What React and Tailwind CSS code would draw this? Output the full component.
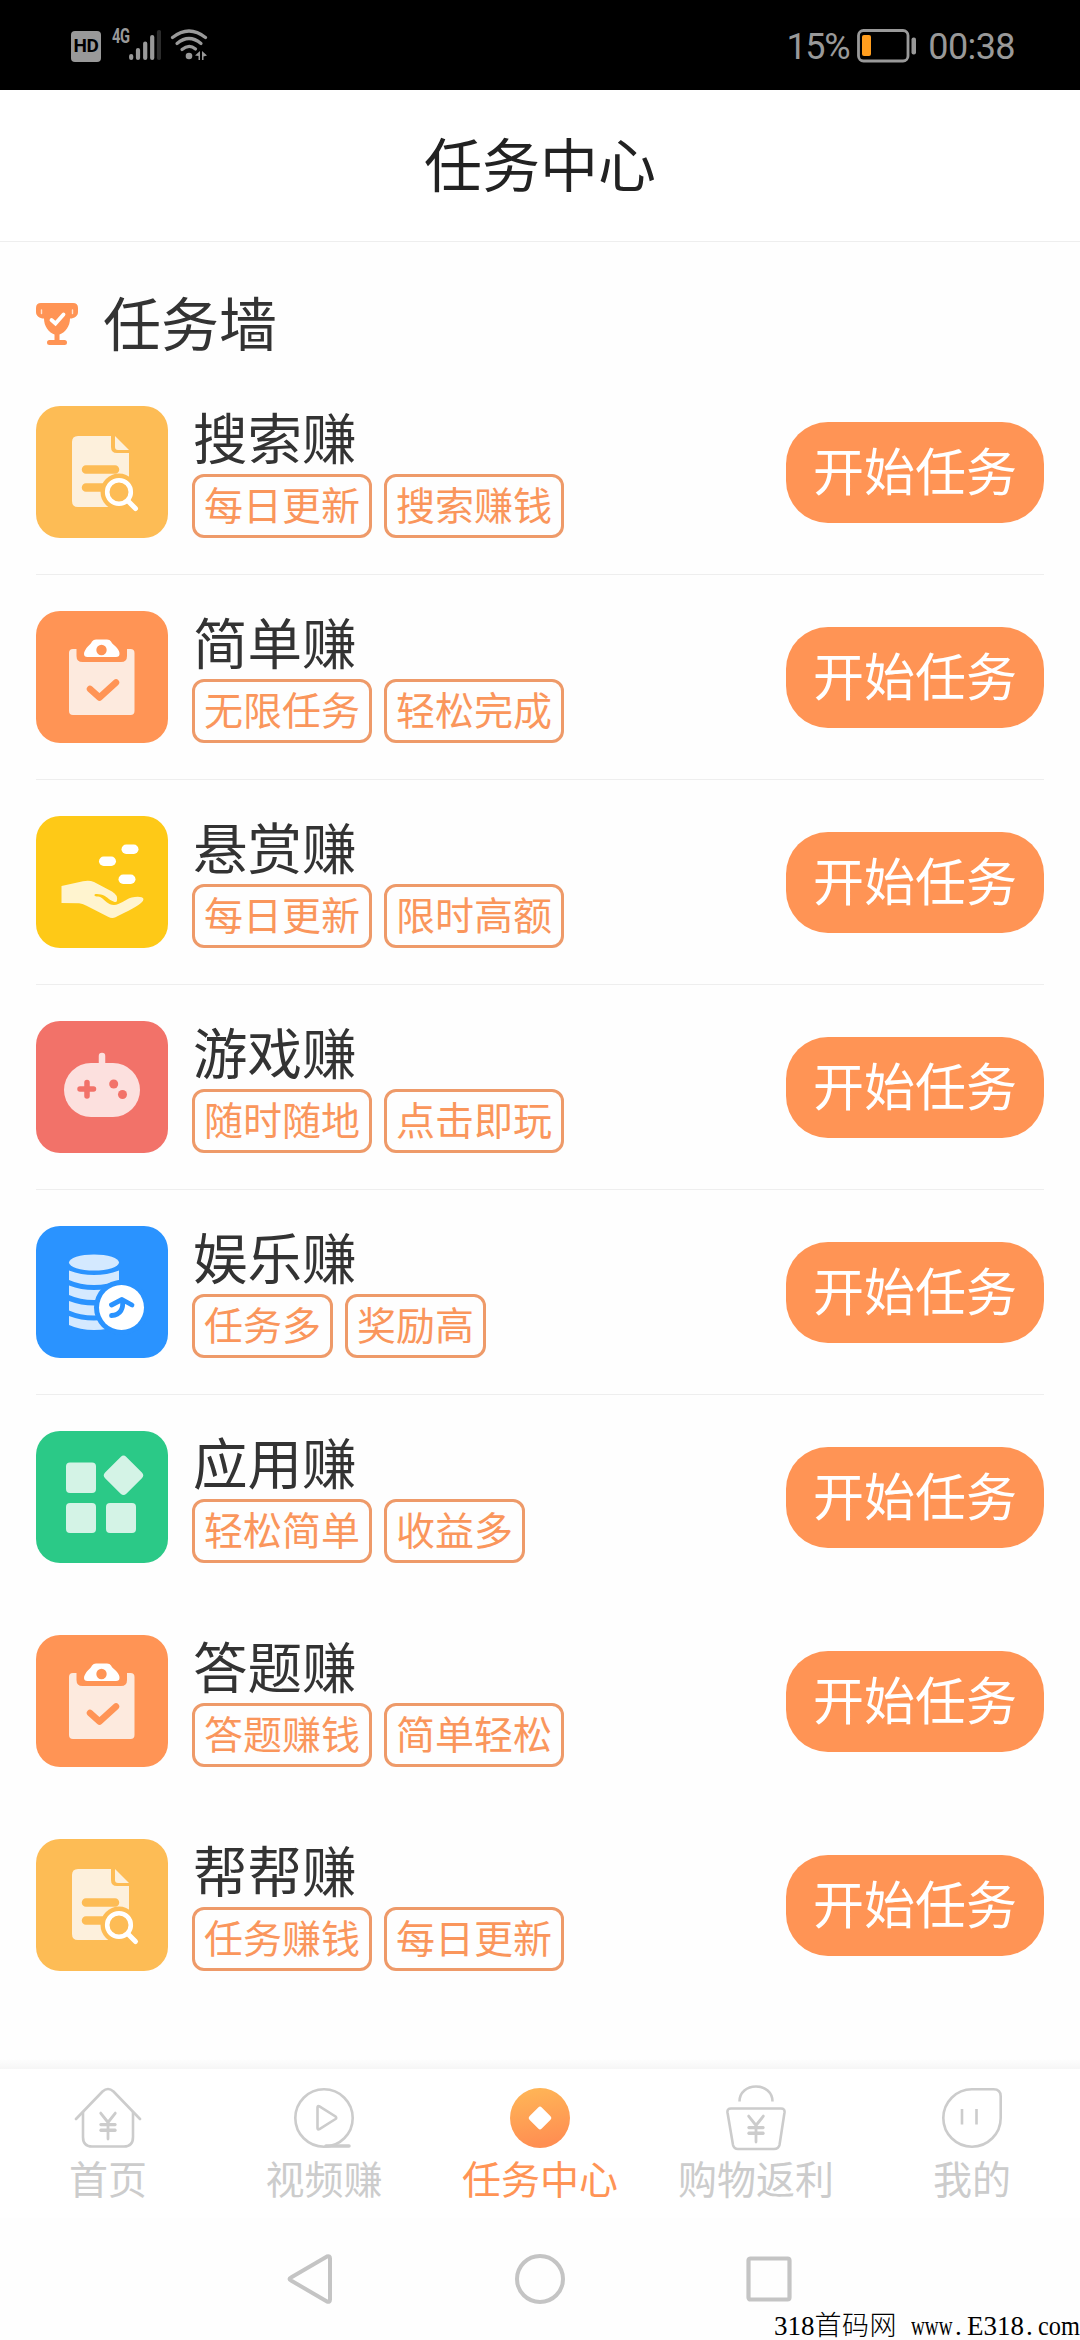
import { JapaneseYen } from "lucide-react";

const DocSearchIcon = () => (
  <svg viewBox="0 0 132 132" className="size-full">
    <path
      d="M42 30H75V41Q75 47 81 47H93V95Q93 101 87 101H42Q36 101 36 95V36Q36 30 42 30Z"
      fill="#fdf0dc"
    />
    <path d="M79 30L93 44H82Q79 44 79 41Z" fill="#fdf0dc" />
    <path d="M50 63.5H79M50 81.5H72" stroke="#fdbc55" strokeWidth="8.5" strokeLinecap="round" />
    <circle cx="83" cy="86" r="18.5" fill="#fdbc55" />
    <path d="M91 94L99 102" stroke="#fdbc55" strokeWidth="11" />
    <circle cx="83" cy="86" r="11.8" fill="none" stroke="#fff" strokeWidth="4.6" />
    <path d="M92 95L99.500 102.500" stroke="#fff" strokeWidth="5" strokeLinecap="round" />
  </svg>
);

const ClipboardIcon = () => (
  <svg viewBox="0 0 132 132" className="size-full">
    <path
      d="M37 38H40.500V45Q40.500 51 46.500 51H85Q91 51 91 45V38H94.500Q98.500 38 98.500 42V100Q98.500 104 94.500 104H37Q33 104 33 100V42Q33 38 37 38Z"
      fill="#fdeade"
    />
    <path
      d="M60 28.500H71Q74 28.500 75 30.500C76 33.500 79 34 81 37C83 39.500 83.500 41 83.500 43Q83.500 46 80 46H51.500Q48 46 48 43C48 41 49 39.500 50.500 37C52.500 34 55 33.500 56 30.500Q57.500 28.500 60 28.500Z"
      fill="#fff"
    />
    <circle cx="65.500" cy="39" r="5.200" fill="#ff9455" />
    <path
      d="M54 78L63.500 86.500L80 71.500"
      fill="none"
      stroke="#ff9455"
      strokeWidth="6.500"
      strokeLinecap="round"
      strokeLinejoin="round"
    />
  </svg>
);

const HandIcon = () => (
  <svg viewBox="0 0 132 132" className="size-full">
    <g fill="#fff">
      <rect x="85.500" y="28.500" width="17" height="9.500" rx="4.700" />
      <rect x="63" y="40.500" width="17" height="9.500" rx="4.700" />
      <rect x="82.500" y="58.500" width="17" height="9.500" rx="4.700" />
    </g>
    <path
      d="M25.500 70L47 65.300Q53 63.800 58 66L76 75.500Q82 79 81 84.500Q80.500 87 77.500 85.500C73 84 70 79.500 65 78.500C62 78 58 77.500 58.500 79.500C59.500 81 63 80 65 81.500C69 84 72 89 78 89C84 89 89 83.500 95.700 81.600C101 80 107 80.500 107.500 83Q107.500 85 105 87C99 92.500 85 98 79.500 101.300Q76 103 72 100.800L50 89.500Q46.500 87.500 43 87.300L25.500 87Z"
      fill="#fff4cf"
    />
  </svg>
);

const GamepadIcon = () => (
  <svg viewBox="0 0 132 132" className="size-full">
    <rect x="28" y="42" width="76" height="54" rx="27" fill="#fce0de" />
    <path d="M66 35V46" stroke="#fce0de" strokeWidth="6.500" strokeLinecap="round" />
    <path d="M44 68H57.500M51 61.500V75" stroke="#f27269" strokeWidth="5.500" strokeLinecap="round" />
    <circle cx="77.700" cy="63" r="4.500" fill="#f27269" />
    <circle cx="86.500" cy="73.500" r="4.500" fill="#f27269" />
  </svg>
);

const CoinsIcon = () => (
  <svg viewBox="0 0 132 132" className="size-full">
    <g fill="#d4e9ff">
      <ellipse cx="58" cy="36.500" rx="25" ry="8" />
      <path d="M33 44.500Q45 49 58 49T83 44.500V54Q72 59 58 59T33 54Z" />
      <path d="M33 59.500Q45 64 58 64T83 59.500V69Q72 74 58 74T33 69Z" />
      <path d="M33 75Q45 79.500 58 79.500T83 75V84.500Q72 89.500 58 89.500T33 84.500Z" />
      <path d="M33 90Q45 94.500 58 94.500T83 90V99Q72 104 58 104T33 99Z" />
    </g>
    <circle cx="85.500" cy="81.500" r="27.500" fill="#2a93ff" />
    <circle cx="85.500" cy="81.500" r="22.500" fill="#fff" />
    <path
      d="M75.500 79L86 73.500L96 79M86.500 74.500C87.500 82 85 89 75.500 89.500"
      fill="none"
      stroke="#2a93ff"
      strokeWidth="4.800"
      strokeLinecap="round"
      strokeLinejoin="round"
    />
  </svg>
);

const AppsIcon = () => (
  <svg viewBox="0 0 132 132" className="size-full" fill="#d4f3e6">
    <rect x="30" y="31.500" width="30" height="30.500" rx="4" />
    <rect x="30" y="72" width="30" height="30" rx="4" />
    <rect x="70" y="72" width="30" height="30" rx="4" />
    <rect x="72.500" y="29.300" width="30" height="30" rx="4" transform="rotate(45 87.500 44.300)" />
  </svg>
);

const TrophyIcon = () => (
  <svg viewBox="0 0 42 42" className="size-[42px]">
    <path
      d="M5 0H37Q42 0 42 5V9C42 13 38.500 15.500 34 15.500C34 23 29.500 29.500 23.500 31.500V37H28.500Q31 37 31 39.500T28.500 42H13.500Q11 42 11 39.500T13.500 37H18.500V31.500C12.500 29.500 8 23 8 15.500C3.500 15.500 0 13 0 9V5Q0 0 5 0Z"
      fill="#ff9455"
    />
    <path d="M5.500 7V10.500M36.500 7V10.500" stroke="#ffe3d1" strokeWidth="1.400" strokeLinecap="round" />
    <path
      d="M15.500 17L19.500 20.500L27.500 11.500"
      fill="none"
      stroke="#fff"
      strokeWidth="3.800"
      strokeLinecap="round"
    />
  </svg>
);

const HomeTabIcon = () => (
  <svg viewBox="0 0 72 66" className="h-[66px] w-[72px]" fill="none" stroke="#ccc" strokeWidth="2.600">
    <path d="M4 34L30.500 6.500Q36 1.500 41.500 6.500L68 34" strokeLinecap="round" />
    <path d="M11 27V52Q11 61.500 20 61.500H52Q61 61.500 61 52V27" />
    <JapaneseYen x="21.500" y="24" width="29" height="34" preserveAspectRatio="none" color="#ccc" strokeWidth={2.3} />
  </svg>
);

const VideoTabIcon = () => (
  <svg viewBox="0 0 72 66" className="h-[66px] w-[72px]" fill="none" stroke="#ccc" strokeWidth="2.600">
    <circle cx="36" cy="33" r="28.700" />
    <path d="M29.500 22.500Q29.500 20.500 31.500 21.500L47.500 31.500Q49 33 47.500 34L31.500 44Q29.500 45 29.500 43Z" />
    <path d="M38 61H61" strokeWidth="3.500" strokeLinecap="round" />
  </svg>
);

const TaskTabIcon = () => (
  <svg viewBox="0 0 72 66" className="h-[66px] w-[72px]">
    <defs>
      <linearGradient id="taskFill" x1="0" y1="0" x2="0.2" y2="1">
        <stop offset="0" stopColor="#ffb857" />
        <stop offset="1" stopColor="#ff8f52" />
      </linearGradient>
    </defs>
    <circle cx="36" cy="33" r="30" fill="url(#taskFill)" />
    <rect x="27.300" y="24.300" width="17.400" height="17.400" rx="2.500" fill="#fff" transform="rotate(45 36 33)" />
  </svg>
);

const ShopTabIcon = () => (
  <svg viewBox="0 0 72 66" className="h-[66px] w-[72px]" fill="none" stroke="#ccc" strokeWidth="2.600">
    <path d="M19.500 16.500C19.500 7 27 1.500 36 1.500S52.500 7 52.500 16.500" />
    <path d="M11 23.500H61Q65 23.500 64.500 27.500L59.500 60Q58.500 64 54 64H18Q14 64 13 60L7.500 27.500Q7 23.500 11 23.500Z" />
    <JapaneseYen x="21.500" y="27" width="29" height="34" preserveAspectRatio="none" color="#ccc" strokeWidth={2.3} />
  </svg>
);

const MineTabIcon = () => (
  <svg viewBox="0 0 72 66" className="h-[66px] w-[72px]" fill="none" stroke="#ccc" strokeWidth="2.600">
    <path d="M36 4.300H57.500Q64.700 4.300 64.700 11.500V33A28.700 28.700 0 1 1 36 4.300Z" />
    <path d="M26 24V39.500M40.500 24V39.500" />
  </svg>
);

const tasks = [
  { title: "搜索赚", tags: ["每日更新", "搜索赚钱"], bg: "bg-[#fdbc55]", Icon: DocSearchIcon, divider: true },
  { title: "简单赚", tags: ["无限任务", "轻松完成"], bg: "bg-[#ff9455]", Icon: ClipboardIcon, divider: true },
  { title: "悬赏赚", tags: ["每日更新", "限时高额"], bg: "bg-[#fec917]", Icon: HandIcon, divider: true },
  { title: "游戏赚", tags: ["随时随地", "点击即玩"], bg: "bg-[#f27269]", Icon: GamepadIcon, divider: true },
  { title: "娱乐赚", tags: ["任务多", "奖励高"], bg: "bg-[#2a93ff]", Icon: CoinsIcon, divider: true },
  { title: "应用赚", tags: ["轻松简单", "收益多"], bg: "bg-[#2bc987]", Icon: AppsIcon },
  { title: "答题赚", tags: ["答题赚钱", "简单轻松"], bg: "bg-[#ff9455]", Icon: ClipboardIcon },
  { title: "帮帮赚", tags: ["任务赚钱", "每日更新"], bg: "bg-[#fdbc55]", Icon: DocSearchIcon },
];

const tabs = [
  { label: "首页", Icon: HomeTabIcon },
  { label: "视频赚", Icon: VideoTabIcon },
  { label: "任务中心", Icon: TaskTabIcon, active: true },
  { label: "购物返利", Icon: ShopTabIcon },
  { label: "我的", Icon: MineTabIcon },
];

const StatusBar = () => (
  <div className="flex h-[90px] shrink-0 items-center bg-black pr-[65px] pl-[71px] font-['Roboto',sans-serif] text-[#999]">
    <span className="mt-0.5 flex h-[31px] w-[30px] items-center justify-center rounded-[4px] bg-[#999] text-[19px] font-bold tracking-[-0.5px] text-black">
      HD
    </span>
    <span className="-mt-[18px] ml-[11px] w-[17px] text-[21px] leading-none font-bold tracking-tight">
      <span className="inline-block origin-left scale-x-[0.7]">4G</span>
    </span>
    <svg viewBox="0 0 32 32" className="size-8" strokeWidth="4.200" strokeLinecap="round" stroke="#999">
      <path d="M2.200 27V29M9 21V29M16.200 14.500V29M23.200 8V29" />
      <path d="M30 3V29" stroke="#2c2c2c" />
    </svg>
    <svg viewBox="0 0 38 32" className="ml-[9px] h-8 w-[38px]" fill="none" stroke="#999" strokeWidth="3.200" strokeLinecap="round">
      <path d="M2.500 8.500Q19 -4.500 35.500 8.500" />
      <path d="M7 14.500Q19 4.500 31 14.500" />
      <path d="M12 20.500Q19 14.500 25.500 20" />
      <circle cx="19" cy="27" r="3.300" fill="#999" stroke="none" />
      <path d="M25 26.500L30 22V31H28.500V27ZM32 22L37 26.500L33.500 27.500V31H32Z" fill="#999" stroke="none" />
    </svg>
    <span className="mt-1 ml-auto text-[36px] tracking-[-1.3px]">15%</span>
    <svg viewBox="0 0 60 34" className="mt-0.5 ml-2 h-[34px] w-[60px]">
      <rect x="1.500" y="1.500" width="49.500" height="30.500" rx="5" fill="none" stroke="#999" strokeWidth="2.800" />
      <rect x="5" y="6" width="9" height="21" rx="2" fill="#ff9d1e" />
      <rect x="54.500" y="8.500" width="4.500" height="17" rx="2" fill="#999" />
    </svg>
    <span className="mt-1 ml-[11px] text-[36px] tracking-[-0.6px]">00:38</span>
  </div>
);

const TaskRow = ({ title, tags, bg, Icon, divider }) => (
  <li className={`flex items-center py-9 ${divider ? "border-b border-[#eee]" : ""}`}>
    <div className={`size-[132px] shrink-0 overflow-hidden rounded-3xl ${bg}`}>
      <Icon />
    </div>
    <div className="ml-6 flex h-[132px] flex-col justify-between">
      <h3 className="ml-px text-[54.500px] leading-[60px] text-[#333]">{title}</h3>
      <div className="flex gap-3">
        {tags.map((tag) => (
          <span
            key={tag}
            className="flex h-16 items-center rounded-[12px] border-[3px] border-[#ee9a69] px-[9px] pb-[5px] text-[39px] leading-none text-[#fa965c]"
          >
            {tag}
          </span>
        ))}
      </div>
    </div>
    <button
      type="button"
      className="ml-auto flex h-[101px] w-[258px] items-center justify-center rounded-[42px] bg-[#ff9455] pb-[5px] text-[51px] leading-none text-white"
    >
      开始任务
    </button>
  </li>
);

const TabBar = () => (
  <nav className="flex h-[149px] shrink-0 bg-white pt-4">
    {tabs.map(({ label, Icon, active }) => (
      <div key={label} className="flex flex-1 flex-col items-center">
        <Icon />
        <span className={`text-[39px] leading-[52px] ${active ? "text-[#ff9455]" : "text-[#ccc]"}`}>
          {label}
        </span>
      </div>
    ))}
  </nav>
);

const SystemNav = () => (
  <div className="flex h-[122px] shrink-0 items-center justify-center gap-[177px]">
    <svg viewBox="0 0 52 52" className="size-[52px]" fill="none" stroke="#c4c4c4" strokeWidth="4" strokeLinejoin="round">
      <path d="M6 24.500L42 3.500Q45 2.500 45 5.500V46.500Q45 49.500 42 48.500L6 27.500Q3 26 6 24.500Z" />
    </svg>
    <svg viewBox="0 0 52 52" className="size-[52px]" fill="none" stroke="#c4c4c4" strokeWidth="4">
      <circle cx="26" cy="26" r="23" />
    </svg>
    <svg viewBox="0 0 52 52" className="size-[52px]" fill="none" stroke="#c4c4c4" strokeWidth="4.200">
      <rect x="5.500" y="5.500" width="41" height="41" rx="2" />
    </svg>
  </div>
);

const App = () => (
  <div className="relative flex h-[2340px] w-[1080px] flex-col overflow-hidden bg-[#fefefe] font-['Noto_Sans_CJK_SC',sans-serif]">
    <StatusBar />
    <header className="flex h-[152px] shrink-0 items-center justify-center border-b border-[#eee] bg-white pb-[7px]">
      <h1 className="text-[58px] leading-none text-[#222]">任务中心</h1>
    </header>

    <main className="flex-1 px-9">
      <div className="flex h-[128px] items-center gap-[25px] pt-9">
        <TrophyIcon />
        <h2 className="pb-[7px] text-[58px] leading-none text-[#333]">任务墙</h2>
      </div>
      <ul>
        {tasks.map((task) => (
          <TaskRow key={task.title} {...task} />
        ))}
      </ul>
    </main>

    <div className="h-[10px] shrink-0 bg-linear-to-b from-[#fefefe] to-[#f6f6f6]" />
    <TabBar />
    <SystemNav />

    {/* site mark, latin letters squeezed into half-width cells */}
    <div className="absolute right-0 bottom-0 flex items-baseline font-['Liberation_Serif','Noto_Sans_CJK_SC',serif] text-[27px] leading-[28px] whitespace-pre text-black">
      <span>318</span>
      <span className="font-light tracking-[0.5px]">首码网</span>
      <span className="ml-[14px] w-[42px]">
        <span className="inline-block origin-left scale-x-[0.71]">www</span>
      </span>
      <span className="w-[14px] pl-0.5">.</span>
      <span>E318</span>
      <span className="w-[14px] pl-0.5">.</span>
      <span className="w-[42px]">
        <span className="inline-block origin-left scale-x-[0.9]">com</span>
      </span>
    </div>
  </div>
);

export default App;
